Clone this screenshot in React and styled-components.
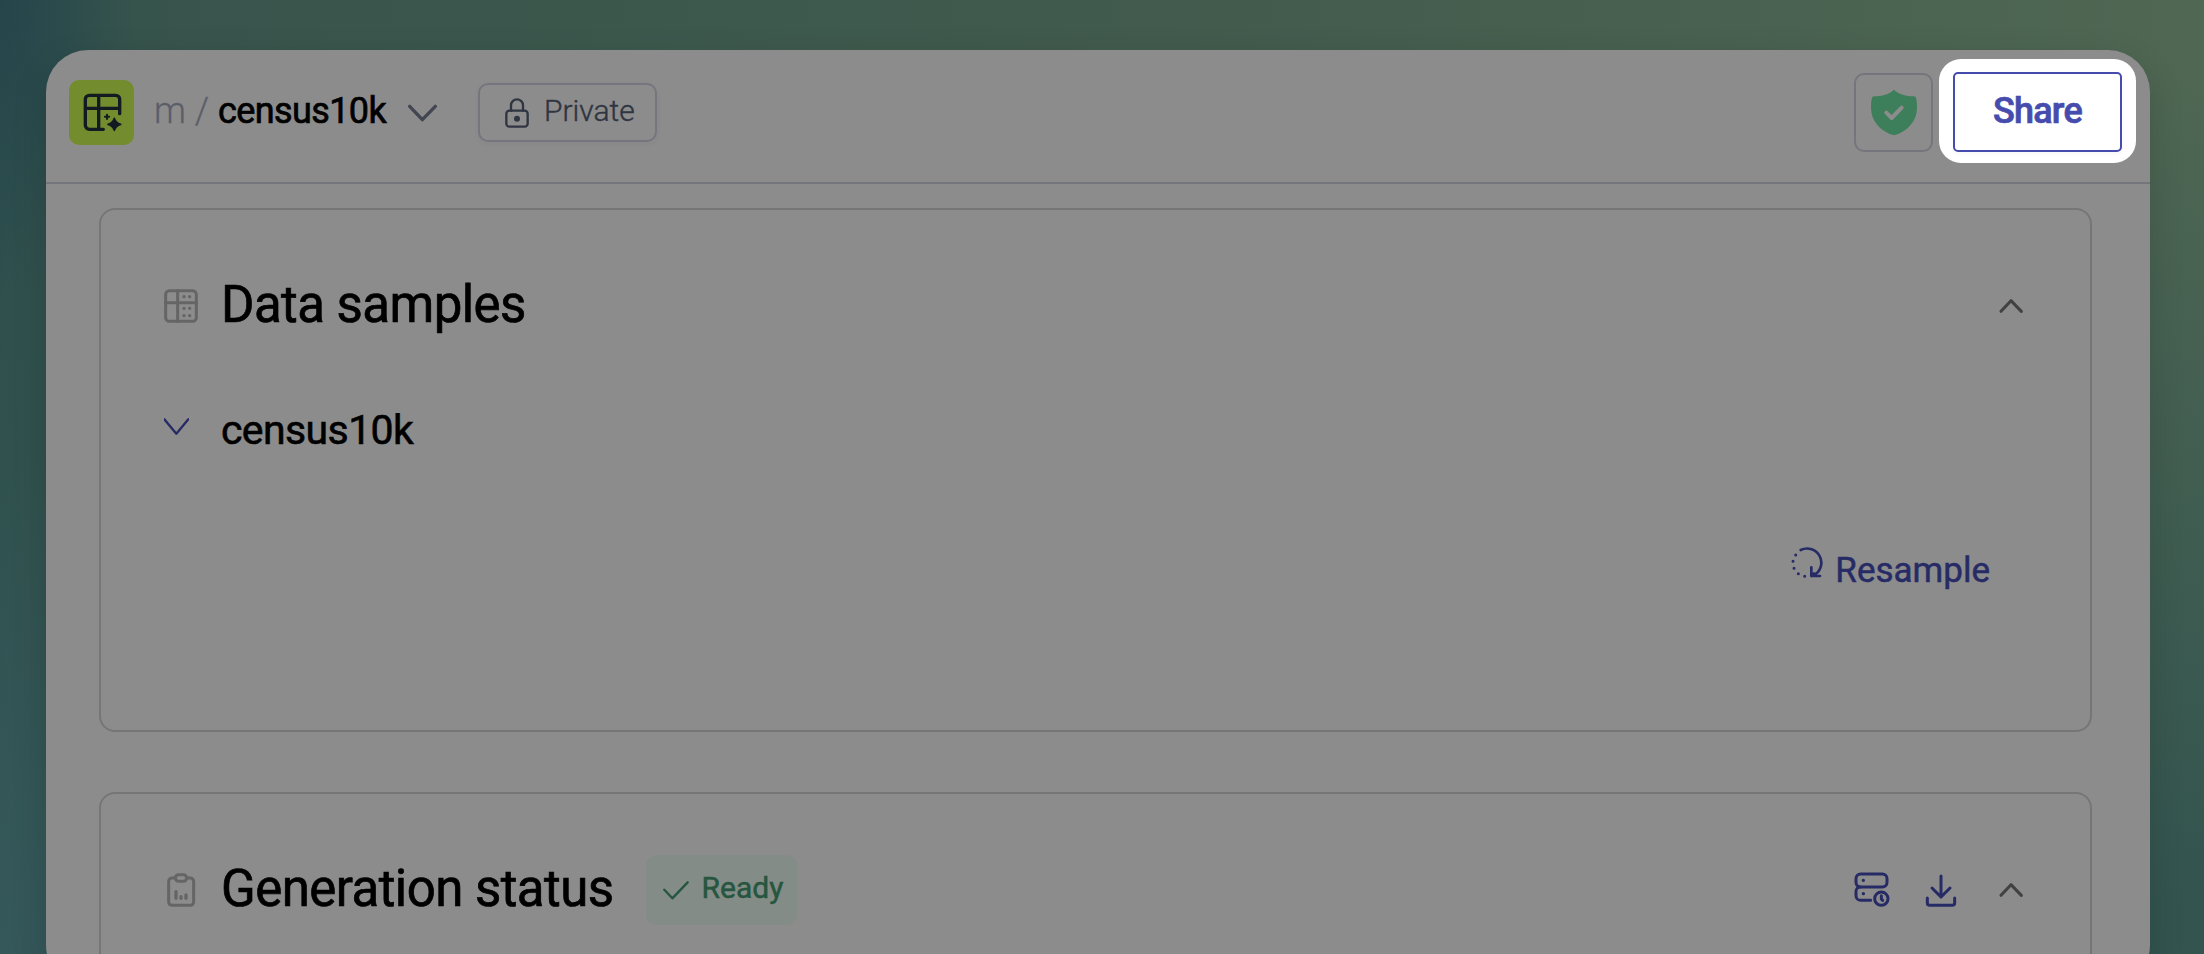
import React from "react";
import styled, { createGlobalStyle } from "styled-components";

const GlobalStyle = createGlobalStyle`
  * { box-sizing: border-box; }
  body { margin: 0; overflow: hidden; font-family: Roboto, "Liberation Sans", sans-serif; }
`;

const Page = styled.div`
  height: 954px;
  padding: 50px 54px 0 46px;
  overflow: hidden;
  background:
    radial-gradient(ellipse 120px 300px at 0 0, #25454b 0%, rgba(37, 69, 75, 0) 100%),
    radial-gradient(ellipse 300px 500px at 0 100%, #35585b 0%, rgba(53, 88, 91, 0) 100%),
    linear-gradient(180deg, rgba(49, 83, 79, 0) 8%, rgba(49, 83, 79, 0.95) 95%),
    linear-gradient(90deg, #2e4f4d 0%, #38544c 8%, #3c584d 30%, #425b4d 55%, #4f6753 100%);
`;

const Panel = styled.main`
  height: 937px;
  border-radius: 42px;
  background: #8c8c8c;
  box-shadow: 0 12px 36px rgba(0, 0, 0, 0.14);
`;

const Header = styled.header`
  display: flex;
  align-items: center;
  height: 134px;
  padding: 22px 28px 30px 23px;
  border-bottom: 2px solid #75757c;
`;

const Logo = styled.div`
  width: 65px;
  height: 65px;
  margin-top: 1px;
  border-radius: 10px;
  background: #738c2d;
`;

const Icon = styled.svg`
  display: block;
  flex: none;
  fill: none;
  stroke: ${(p) => p.$color};
  stroke-width: ${(p) => p.$stroke || 8};
  stroke-linecap: round;
  stroke-linejoin: round;
`;

const Breadcrumb = styled.div`
  display: flex;
  align-items: baseline;
  margin: -3px 0 0 20px;
  font-size: 36px;
  line-height: 42px;
  white-space: pre;
`;

const Owner = styled.span`
  width: 64px;
  color: #5b5e69;
  font-weight: 300;
  -webkit-text-stroke: 0.3px;
`;

const Project = styled.span`
  width: 168px;
  color: #000;
  letter-spacing: -0.6px;
  -webkit-text-stroke: 0.7px;
`;

const MenuArrow = styled.span`
  margin: 1px 0 0 21px;
`;

const Visibility = styled.div`
  display: flex;
  align-items: center;
  gap: 15px;
  width: 179px;
  height: 59px;
  margin: 1px auto 0 40px;
  padding: 0 0 0 25px;
  border: 2px solid #75767d;
  border-radius: 10px;
  box-shadow: 0 2px 6px rgba(0, 0, 0, 0.04);
  color: #2f3541;
  font-size: 30px;
  font-weight: 300;
  line-height: 36px;
  -webkit-text-stroke: 0.4px;
`;

const VisibilityText = styled.span`
  margin-top: -4px;
`;

const Protection = styled.div`
  display: grid;
  place-items: center;
  width: 79px;
  height: 79px;
  margin: 1px 20px 0 0;
  border: 2px solid #75767d;
  border-radius: 10px;
`;

const ShareButton = styled.button`
  position: relative;
  z-index: 0;
  width: 169px;
  height: 80px;
  padding: 0 0 2px;
  border: 2px solid #454cae;
  border-radius: 5px;
  background: #fff;
  color: #454cae;
  font: 500 36px/42px Roboto, sans-serif;
  letter-spacing: -0.8px;
  -webkit-text-stroke: 0.7px;

  &::before {
    content: "";
    position: absolute;
    z-index: -1;
    inset: -15px -16px -13px;
    border-radius: 22px;
    background: #fff;
  }

  &::after {
    content: "";
    position: absolute;
    z-index: -1;
    inset: -2px;
    border: 2px solid #454cae;
    border-radius: 5px;
    background: #fff;
    box-shadow: 0 3px 3px rgba(0, 0, 0, 0.025);
  }
`;

const Content = styled.div`
  display: flex;
  flex-direction: column;
  gap: 60px;
  padding: 24px 58px 0 53px;
`;

const Card = styled.section`
  height: 524px;
  padding: 61px 67px 0 63px;
  border: 2px solid #767676;
  border-radius: 16px;
`;

const CardHeader = styled.div`
  display: flex;
  align-items: center;
  height: 70px;
`;

const IconSlot = styled.span`
  display: flex;
  width: 57px;
  margin-top: ${(p) => p.$lift || 0}px;
`;

const CardTitle = styled.h2`
  margin: -3px 0 0;
  color: #000;
  font-size: 51px;
  font-weight: 400;
  line-height: 60px;
  letter-spacing: -0.55px;
  -webkit-text-stroke: 0.7px;
`;

const Badge = styled.span`
  display: flex;
  align-items: center;
  gap: 13px;
  width: 151px;
  height: 70px;
  margin-left: 32px;
  padding-left: 17px;
  border-radius: 10px;
  background: #848c87;
  color: #26563f;
  font-size: 30px;
  line-height: 36px;
  -webkit-text-stroke: 0.5px;
`;

const BadgeText = styled.span`
  margin-top: -4px;
`;

const Actions = styled.div`
  display: flex;
  align-items: center;
  gap: 42px;
  margin-left: auto;
`;

const FileActions = styled.div`
  display: flex;
  align-items: center;
  gap: 35px;
`;

const TableRow = styled.div`
  display: flex;
  align-items: center;
  height: 50px;
  margin-top: 64px;
`;

const TableName = styled.span`
  color: #000;
  font-size: 41px;
  line-height: 48px;
  letter-spacing: -0.6px;
  -webkit-text-stroke: 0.6px;
`;

const ResampleRow = styled.div`
  display: flex;
  justify-content: flex-end;
  align-items: center;
  gap: 12px;
  margin-top: 95px;
  padding-right: 33px;
  color: #262b65;
  font-size: 35px;
  line-height: 42px;
  -webkit-text-stroke: 0.5px;
`;

const ResampleIcon = styled.span`
  margin-top: -16px;
`;

const NAVY = "#262b65";
const GRAY = "#656565";

const LogoIcon = () => (
  <Icon width="65" height="65" viewBox="0 0 195 195" $color="#141a22" $stroke={10}>
    <path d="M103 148H61a12 12 0 0 1-12-12V58a12 12 0 0 1 12-12h79a12 12 0 0 1 12 12v43M89 46v102M49 85h103" />
    <path d="M136 115q4 14 19 18q-15 4-19 18q-4-14-19-18q15-4 19-18z" fill="#141a22" strokeWidth="5" />
    <path d="M114 104v13M107.500 110.500h13" strokeWidth="6" />
  </Icon>
);

const LockIcon = () => (
  <Icon width="24" height="30" viewBox="0 0 72 90" $color="#2f3541" $stroke={7}>
    <rect x="4" y="38" width="64" height="48" rx="9" />
    <path d="M18 38V22a18 18 0 0 1 36 0v16" />
    <circle cx="36" cy="62" r="5.5" fill="#2f3541" />
  </Icon>
);

const ShieldIcon = () => (
  <Icon width="48" height="48" viewBox="0 0 144 144" $color="#3d7f5b" $stroke={6}>
    <path d="M72 2C57 16 36 22 12 22Q7 22 6 27C3 37 3 45 3 56C3 96 31 127 72 139C113 127 141 96 141 56C141 45 141 37 138 27Q137 22 132 22C108 22 87 16 72 2z" fill="#3d7f5b" stroke="none" />
    <path d="M49 71l16 16l30-31" stroke="#8c8c8c" strokeWidth="12" />
  </Icon>
);

const TableIcon = () => (
  <Icon width="34" height="34" viewBox="0 0 102 102" $color={GRAY} $stroke={9}>
    <rect x="5" y="5" width="92" height="92" rx="11" />
    <path d="M41 5v92M5 41h92" />
    <path d="M60 23h.1M77 23h.1M60 58h.1M77 58h.1M60 80h.1M77 80h.1" strokeWidth="10" />
  </Icon>
);

const ClipboardIcon = () => (
  <Icon width="34" height="34" viewBox="0 0 102 102" $color={GRAY} $stroke={9}>
    <path d="M33 15H24a10 10 0 0 0-10 10v62a10 10 0 0 0 10 10h55a10 10 0 0 0 10-10V25a10 10 0 0 0-10-10H69" />
    <rect x="34" y="5" width="34" height="20" rx="10" />
    <path d="M36 56v20M51 71v5M66 66v10" strokeWidth="10" />
  </Icon>
);

const ChevronUp = () => (
  <Icon width="24" height="16" viewBox="0 0 72 48" $color="#414141" $stroke={9}>
    <path d="M6 40l30-32l31 32" />
  </Icon>
);

const ServerClockIcon = () => (
  <Icon width="36" height="36" viewBox="0 0 108 108" $color={NAVY} $stroke={9}>
    <rect x="6" y="6" width="93" height="39" rx="14" />
    <path d="M19 45a13 13 0 0 0-13 13v13a14 14 0 0 0 14 14h30" />
    <circle cx="82" cy="80" r="20" />
    <path d="M82 71v10l4 4" />
    <path d="M28 25h.1M28 65h.1" strokeWidth="10" />
  </Icon>
);

const DownloadIcon = () => (
  <Icon width="32" height="34" viewBox="0 0 96 102" $color={NAVY} $stroke={9}>
    <path d="M48 9v63M21 45l27 27l27-27" />
    <path d="M7 75v15a7 7 0 0 0 7 7h68a7 7 0 0 0 7-7V75" />
  </Icon>
);

const ResampleGlyph = () => (
  <Icon width="32" height="32" viewBox="0 0 96 96" $color={NAVY} $stroke={8}>
    <path d="M29 9A42 42 0 0 1 67 86" />
    <path d="M61 61v26h26M61 87l8-8" />
    <path d="M14 24h.1M6 43h.1M9 64h.1M22 80h.1M41 88h.1" strokeWidth="9" />
  </Icon>
);

export default function App() {
  return (
    <>
      <GlobalStyle />
      <Page>
        <Panel>
          <Header>
            <Logo><LogoIcon /></Logo>
            <Breadcrumb>
              <Owner>m / </Owner>
              <Project>census10k</Project>
            </Breadcrumb>
            <MenuArrow>
              <Icon width="31" height="18" viewBox="0 0 93 54" $color="#414652" $stroke={10}>
                <path d="M8 7l38 40l39-40" />
              </Icon>
            </MenuArrow>
            <Visibility>
              <LockIcon />
              <VisibilityText>Private</VisibilityText>
            </Visibility>
            <Protection><ShieldIcon /></Protection>
            <ShareButton>Share</ShareButton>
          </Header>
          <Content>
            <Card>
              <CardHeader>
                <IconSlot><TableIcon /></IconSlot>
                <CardTitle>Data samples</CardTitle>
                <Actions><ChevronUp /></Actions>
              </CardHeader>
              <TableRow>
                <IconSlot $lift={-7}>
                  <Icon width="25" height="18" viewBox="0 0 75 54" $color={NAVY} $stroke={7}>
                    <path d="M1 4l36 43l36-43" />
                  </Icon>
                </IconSlot>
                <TableName>census10k</TableName>
              </TableRow>
              <ResampleRow>
                <ResampleIcon><ResampleGlyph /></ResampleIcon>
                <span>Resample</span>
              </ResampleRow>
            </Card>
            <Card>
              <CardHeader>
                <IconSlot><ClipboardIcon /></IconSlot>
                <CardTitle>Generation status</CardTitle>
                <Badge>
                  <Icon width="26" height="20" viewBox="0 0 78 60" $color="#26563f" $stroke={7}>
                    <path d="M4 29l24 26l46-48" />
                  </Icon>
                  <BadgeText>Ready</BadgeText>
                </Badge>
                <Actions>
                  <FileActions>
                    <ServerClockIcon />
                    <DownloadIcon />
                  </FileActions>
                  <ChevronUp />
                </Actions>
              </CardHeader>
            </Card>
          </Content>
        </Panel>
      </Page>
    </>
  );
}
